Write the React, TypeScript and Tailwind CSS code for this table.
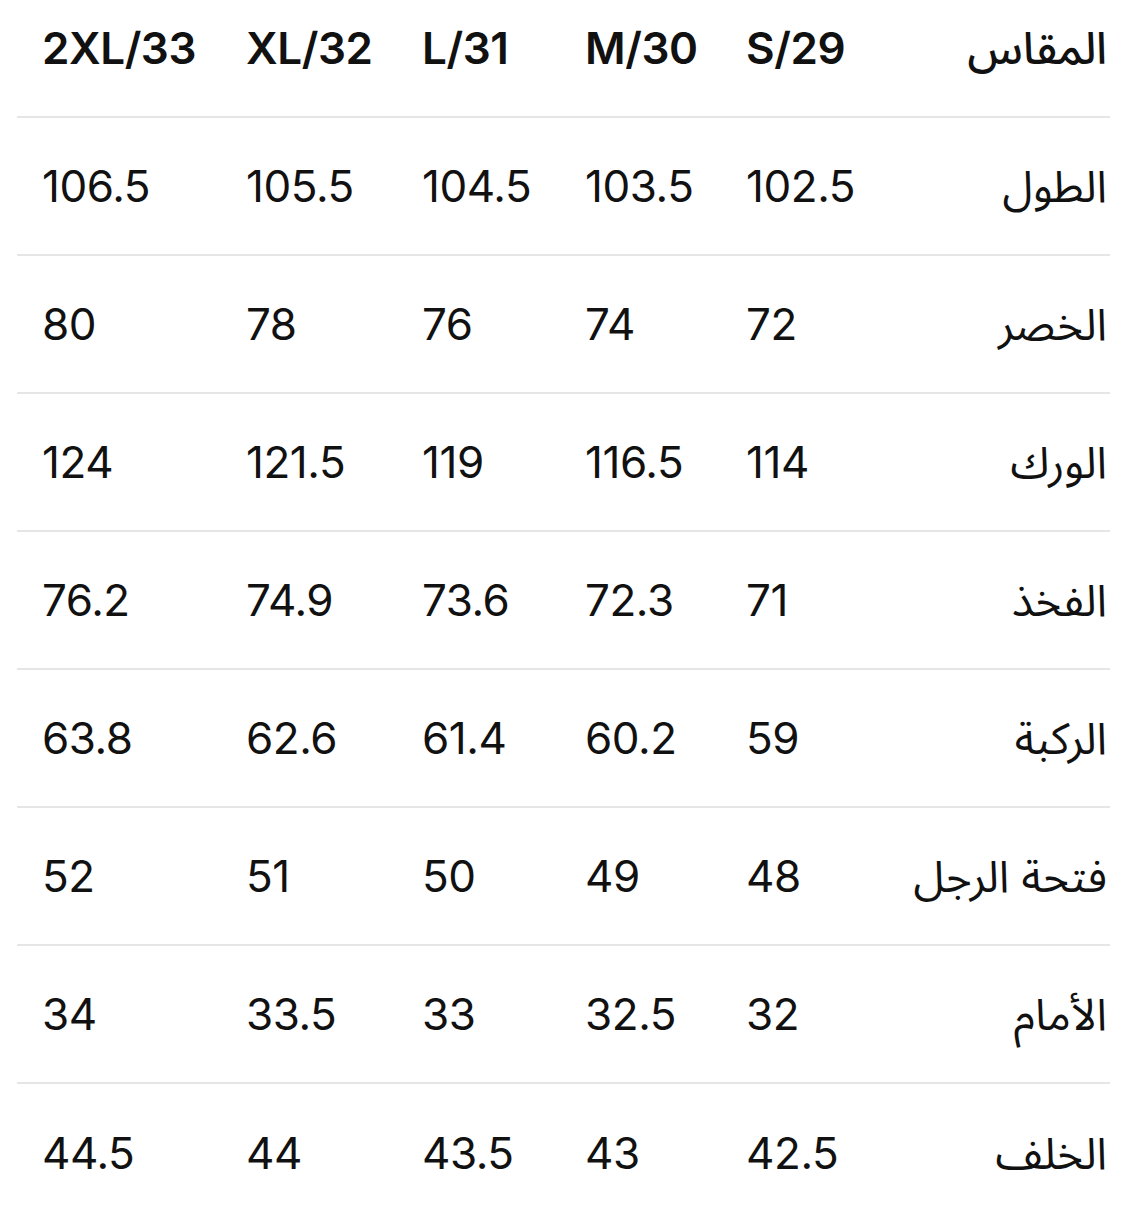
const sizes = ["2XL/33", "XL/32", "L/31", "M/30", "S/29"];

const rows: { label: string; values: string[] }[] = [
  { label: "الطول", values: ["106.5", "105.5", "104.5", "103.5", "102.5"] },
  { label: "الخصر", values: ["80", "78", "76", "74", "72"] },
  { label: "الورك", values: ["124", "121.5", "119", "116.5", "114"] },
  { label: "الفخذ", values: ["76.2", "74.9", "73.6", "72.3", "71"] },
  { label: "الركبة", values: ["63.8", "62.6", "61.4", "60.2", "59"] },
  { label: "فتحة الرجل", values: ["52", "51", "50", "49", "48"] },
  { label: "الأمام", values: ["34", "33.5", "33", "32.5", "32"] },
  { label: "الخلف", values: ["44.5", "44", "43.5", "43", "42.5"] },
];

function Row({
  label,
  values,
  head,
  last,
}: {
  label: string;
  values: string[];
  head?: boolean;
  last?: boolean;
}) {
  return (
    <div
      className={`grid h-[138px] grid-cols-[204px_176px_163px_161px_1fr_auto] items-center pl-[25px] pr-[3px] ${
        last ? "" : "border-b-2 border-[#e6e6e6]"
      }`}
    >
      {values.map((v, i) => (
        <div
          key={i}
          className={`whitespace-nowrap ${head ? "font-semibold" : "font-normal"}`}
        >
          {v}
        </div>
      ))}
      <div
        dir="rtl"
        className={`whitespace-nowrap text-right text-[44px] ${head ? "font-medium" : "font-normal"}`}
      >
        {label}
      </div>
    </div>
  );
}

export default function App() {
  return (
    <div className="h-[1216px] w-[1148px] overflow-hidden bg-white">
      <div
        className="ml-[17px] mt-[-20px] w-[1093px] text-[44px] leading-[1.2] tracking-[-0.01em] text-[#111111]"
        style={{ fontFamily: "Inter, 'Noto Sans Arabic', 'DejaVu Sans', sans-serif" }}
      >
        <Row label="المقاس" values={sizes} head />
        {rows.map((r, i) => (
          <Row key={r.label} label={r.label} values={r.values} last={i === rows.length - 1} />
        ))}
      </div>
    </div>
  );
}
